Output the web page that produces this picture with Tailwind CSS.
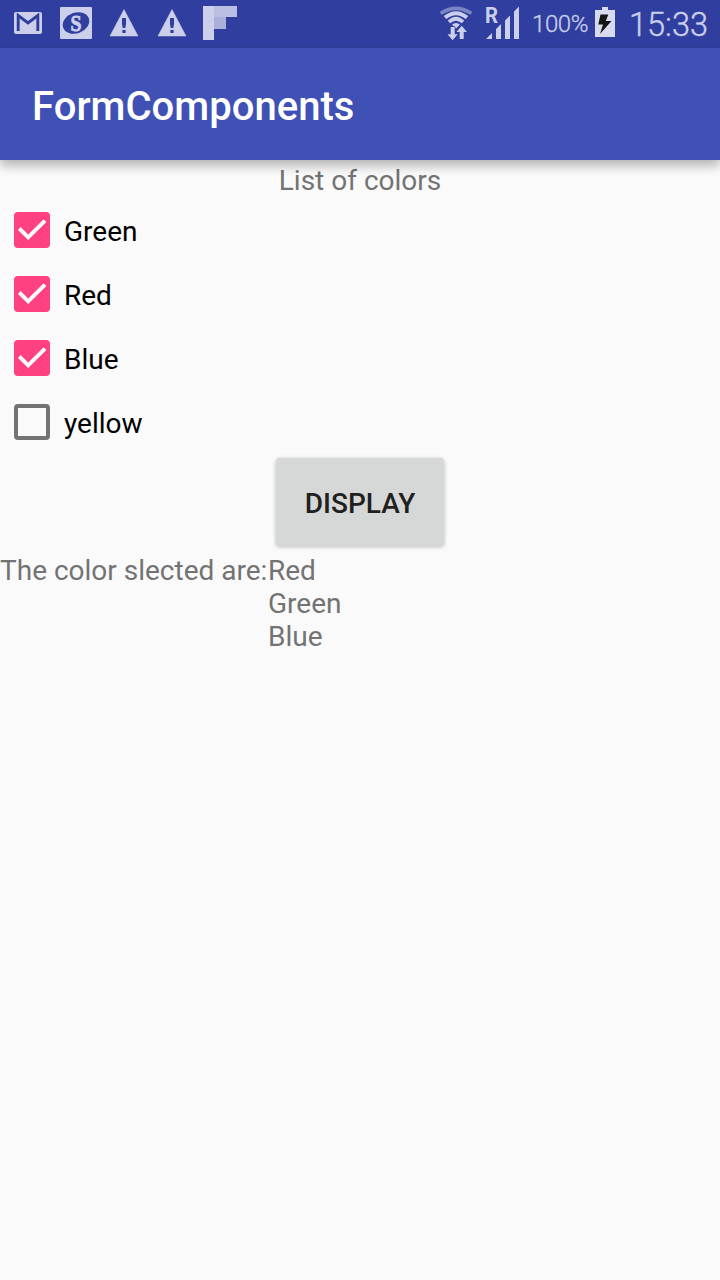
<!DOCTYPE html>
<html lang="en">
<head>
<meta charset="utf-8">
<title>FormComponents</title>
<script src="https://cdn.jsdelivr.net/npm/@tailwindcss/browser@4"></script>
</head>
<body class="flex h-[1280px] w-[720px] flex-col overflow-hidden bg-[#fafafa] font-['Roboto',sans-serif] text-[28px] leading-[33px] text-[#737373]">
<div class="flex h-12 shrink-0 items-center justify-between bg-[#303f9f] text-[#cbcfe9]">
  <div class="flex pl-1">
    <svg class="h-12 w-12" viewBox="4 0 48 48" fill="#cbcfe9"><rect x="14" y="12" width="28" height="22" rx="2"/><path d="M18.2 31V15.500L28 23l9.800-7.500V31" fill="none" stroke="#303f9f" stroke-width="2.900"/></svg>
    <svg class="h-12 w-12" viewBox="52 0 48 48" fill="#cbcfe9"><rect x="60" y="7" width="32" height="32" rx="1"/><ellipse cx="76" cy="23" rx="13.600" ry="10.300" transform="rotate(-20 76 23)" fill="#303f9f"/><text x="70.500" y="31.300" textLength="11" lengthAdjust="spacingAndGlyphs" class="font-['Liberation_Serif',serif] text-[24px] font-bold" stroke="#cbcfe9" stroke-width=".8">S</text></svg>
    <svg class="h-12 w-12" viewBox="100 0 48 48" fill="#cbcfe9"><path d="M124 9.500 138 36H110Z" stroke="#cbcfe9" stroke-width=".5" stroke-linejoin="round"/><path d="M122 18h4v6l-.7 4h-2.600l-.7-4ZM122.400 30h3.200v3h-3.200Z" fill="#303f9f"/></svg>
    <svg class="h-12 w-12" viewBox="148 0 48 48" fill="#cbcfe9"><path d="M172 9.500 186 36H158Z" stroke="#cbcfe9" stroke-width=".5" stroke-linejoin="round"/><path d="M170 18h4v6l-.7 4h-2.600l-.7-4ZM170.400 30h3.200v3h-3.200Z" fill="#303f9f"/></svg>
    <svg class="h-12 w-12" viewBox="196 0 48 48"><path d="M203 6h11v34h-11Z" fill="#cbcfe9"/><path d="M214 6h23v11h-23Z" fill="#bbbfe1"/><path d="M214 17h12v12h-12Z" fill="#aab0da"/></svg>
  </div>
  <div class="flex items-center pr-[12px]">
    <svg class="h-12 w-[45px]" viewBox="436 0 45 48" fill="none" stroke="#cbcfe9">
      <path d="M440.700 13.300Q456 3.300 471.300 13.300" stroke="#7c85c4" stroke-width="3.600"/>
      <path d="M445 17.500Q456 9 467 17.500M449 22Q456 15.500 463 22" stroke-width="3.700"/>
      <path d="M452 24.500Q456 21.300 460 24.500L456 28.500Z" fill="#cbcfe9" stroke="none"/>
      <path d="M450.700 27h4v7.200h3L452.600 40.300 447.500 34.200h3.200ZM459.700 39h4v-7h3.200L461.700 25.700 456.500 32h3.200Z" fill="#cbcfe9" stroke="#303f9f" stroke-width="1.200" paint-order="stroke"/>
    </svg>
    <svg class="h-12 w-[49px]" viewBox="481 0 49 48" fill="#cbcfe9"><path d="M486 39l6-6v6ZM496 29l5-5v15h-5ZM505 20.500l5-5V39h-5ZM514 11.500l5-5V39h-5Z"/><text x="485" y="22.800" textLength="13" lengthAdjust="spacingAndGlyphs" class="text-[22px] font-bold">R</text></svg>
    <span class="ml-[2px] w-[61px] text-[24px] font-light tracking-[-0.4px] whitespace-nowrap [-webkit-text-stroke:0.3px_#cbcfe9]">100%</span>
    <svg class="h-12 w-6" viewBox="593 0 24 48"><path d="M602 7h6v3h7v27h-20V10h7Z" fill="#d8daed"/><path d="M600.500 14.500h7.800l-2.500 6.500h5.700L600 34l3-9.500h-4.700Z" fill="#151515"/></svg>
    <span class="ml-3 w-[79px] pt-[2px] text-[32.500px] font-light whitespace-nowrap [-webkit-text-stroke:0.4px_#cbcfe9]">15:33</span>
  </div>
</div>
<header class="z-10 flex h-28 shrink-0 items-center bg-[#3f51b5] pt-1 pl-8 text-[40px] font-medium tracking-[0.03px] text-white shadow-[0_6px_10px_rgba(0,0,0,0.28)]">FormComponents</header>
<main class="flex flex-col">
  <h2 class="h-[38px] pt-[4px] text-center">List of colors</h2>
  <div class="flex flex-col text-black">
    <label class="flex h-16 items-center gap-[14px] pl-[14px]"><svg class="h-9 w-9" viewBox="0 0 36 36"><rect width="36" height="36" rx="4" fill="#ff4081"/><path d="m5.300 16.500 8.900 8.800L31 8.700" fill="none" stroke="#fafafa" stroke-width="4"/></svg><span class="pt-[2px]">Green</span></label>
    <label class="flex h-16 items-center gap-[14px] pl-[14px]"><svg class="h-9 w-9" viewBox="0 0 36 36"><rect width="36" height="36" rx="4" fill="#ff4081"/><path d="m5.300 16.500 8.900 8.800L31 8.700" fill="none" stroke="#fafafa" stroke-width="4"/></svg><span class="pt-[2px]">Red</span></label>
    <label class="flex h-16 items-center gap-[14px] pl-[14px]"><svg class="h-9 w-9" viewBox="0 0 36 36"><rect width="36" height="36" rx="4" fill="#ff4081"/><path d="m5.300 16.500 8.900 8.800L31 8.700" fill="none" stroke="#fafafa" stroke-width="4"/></svg><span class="pt-[2px]">Blue</span></label>
    <label class="flex h-16 items-center gap-[14px] pl-[14px]"><span class="h-9 w-9 rounded-[4px] border-4 border-[#737373]"></span><span class="pt-[2px]">yellow</span></label>
  </div>
  <button class="mt-1 h-[88px] w-[168px] self-center rounded-[4px] bg-[#d6d8d7] pt-[2px] font-medium text-[#1f2020] shadow-[0_1px_4px_rgba(0,0,0,0.25)]">DISPLAY</button>
  <div class="mt-2 flex">
    <p class="w-[268px] whitespace-nowrap">The color slected are:</p>
    <p>Red<br>Green<br>Blue</p>
  </div>
</main>
</body>
</html>
